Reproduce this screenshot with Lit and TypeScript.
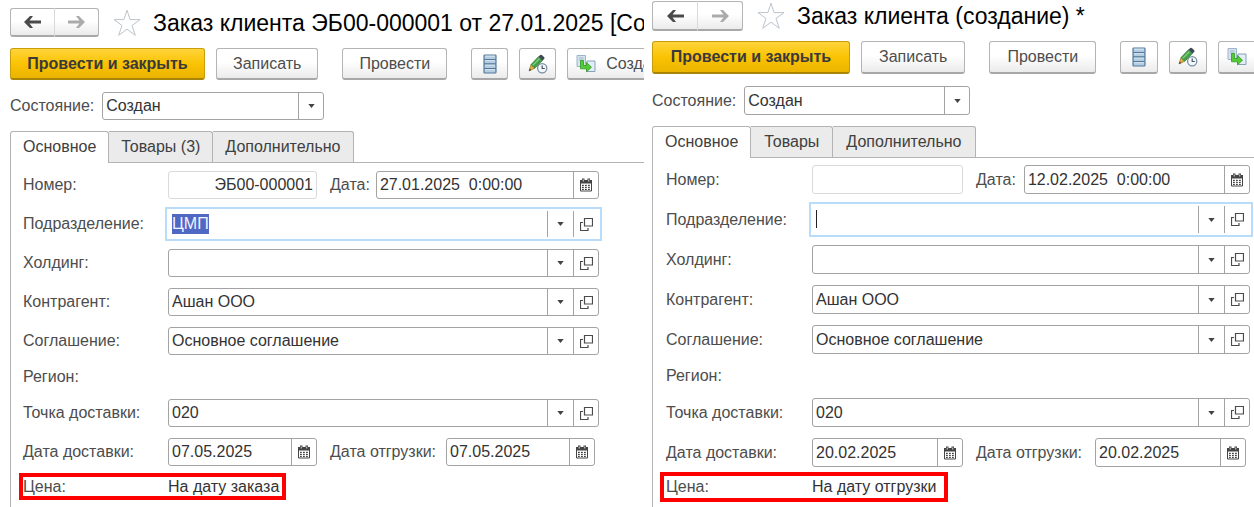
import { LitElement, html, css, svg, nothing } from "lit";
import { customElement, property } from "lit/decorators.js";
import { classMap } from "lit/directives/class-map.js";

interface Order {
  title: string;
  tabs: string[];
  number: string;
  date: string;
  department: string;
  partner: string;
  agreement: string;
  point: string;
  delivery: string;
  shipment: string;
  price: string;
}

const savedOrder: Order = {
  title: "Заказ клиента ЭБ00-000001 от 27.01.2025 [Создан]",
  tabs: ["Основное", "Товары (3)", "Дополнительно"],
  number: "ЭБ00-000001",
  date: "27.01.2025  0:00:00",
  department: "ЦМП",
  partner: "Ашан ООО",
  agreement: "Основное соглашение",
  point: "020",
  delivery: "07.05.2025",
  shipment: "07.05.2025",
  price: "На дату заказа",
};

const newOrder: Order = {
  title: "Заказ клиента (создание) *",
  tabs: ["Основное", "Товары", "Дополнительно"],
  number: "",
  date: "12.02.2025  0:00:00",
  department: "",
  partner: "Ашан ООО",
  agreement: "Основное соглашение",
  point: "020",
  delivery: "20.02.2025",
  shipment: "20.02.2025",
  price: "На дату отгрузки",
};

const arrow = (forward: boolean) => html`
  <svg width="17" height="12" viewBox="0 0 17 12" aria-hidden="true">
    <g transform=${forward ? "translate(17 0) scale(-1 1)" : "translate(0 0)"}>
      <path d="M0 6 6 0H9L5.600 4.500H17v3H5.600L9 12H6z" fill="currentColor" />
    </g>
  </svg>`;

const star = html`
  <svg width="28" height="28" viewBox="0 0 28 28" aria-hidden="true">
    <path d="M14 1.200 17.100 10.600H27L19 16.500 22.300 26.300 14 20.200 5.700 26.300 9 16.500 1 10.600h9.900z"
      fill="#fff" stroke="#bcc4cc" stroke-width="1" />
  </svg>`;

const caretDown = html`
  <svg width="7" height="4" viewBox="0 0 7 4" aria-hidden="true">
    <path d="M.3 0h6.400L3.500 4z" fill="#444" />
  </svg>`;

const openIcon = html`
  <svg width="13" height="13" viewBox="0 0 13 13" aria-hidden="true">
    <path d="M4.500 .5h8v7.500h-8z M3 4.500H.5v8h7.500v-2.500" fill="none" stroke="#4a4a4a" stroke-width="1.200" />
  </svg>`;

const calendarIcon = html`
  <svg width="12" height="14" viewBox="0 0 12 14" aria-hidden="true">
    <path d="M.5 2.500h11v10.500H.5z" fill="#fff" stroke="#444" />
    <path d="M0 2h12v3.500H0z M2 .5h2.500v3H2z M7.500 .5H10v3H7.500z" fill="#444" />
    <path d="M2.800 1.500h.8v2h-.8z M8.400 1.500h.8v2h-.8z" fill="#fff" />
    ${[2, 5, 8].map((x) => [6.8, 8.8, 10.8].map((y) => svg`<rect x=${x} y=${y} width="1.800" height="1.200" fill="#444" />`))}
  </svg>`;

const listIcon = html`
  <svg width="14" height="20" viewBox="0 0 14 20" aria-hidden="true">
    ${[1, 5.5, 10, 14.5].map(
      (y) => svg`<rect x="1" y=${y} width="12" height="4.500" rx=".8" fill="#b3cce0" stroke="#53789a" stroke-width="1.200" />
        <path d=${`M2 ${y + 1.2}h10`} stroke="#dbe8f2" stroke-width=".9" />`,
    )}
  </svg>`;

const pencilIcon = html`
  <svg width="20" height="20" viewBox="0 0 20 20" aria-hidden="true">
    <path d="M1 17 3 10.500 6.800 14.200z" fill="#e0b040" stroke="#9a7428" stroke-width=".7" />
    <path d="M1 17 1.700 14.600 3.300 16z" fill="#444" />
    <path d="M3 10.500 10.400 2.800 14.500 6.600 6.800 14.200z" fill="#43a047" stroke="#2c7a34" stroke-width=".7" />
    <path d="M4.800 11.400 11.500 4.500" stroke="#84cf85" stroke-width="1.300" />
    <path d="M10.400 2.800 12.200 1q1-.6 1.900.2l2.100 2q.7.900 0 1.700L14.500 6.600z" fill="#3f4a56" />
    <circle cx="14.200" cy="14.300" r="4.600" fill="#f4f8fb" stroke="#7890a4" stroke-width="1.300" />
    <path d="M14.200 11.500v3h2.600" fill="none" stroke="#445566" stroke-width="1.200" />
  </svg>`;

const createIcon = html`
  <svg width="20" height="20" viewBox="0 0 20 20" aria-hidden="true">
    <path d="M1 1.500h8.500v11H1z" fill="#d6e4ef" stroke="#9db4c8" />
    <path d="M3 4h4.500M3 6h4.500" stroke="#9db4c8" />
    <path d="M11 7h8v10.500h-8z" fill="#e3edf5" stroke="#86a2ba" />
    <path d="M4.500 6.500h3v5h3V8.600l5 4.600-5 4.600v-3h-6z" fill="#55c936" stroke="#2f9c22" stroke-width=".8" />
  </svg>`;

@customElement("order-form")
export class OrderForm extends LitElement {
  @property({ attribute: false }) order!: Order;
  @property({ type: Boolean, reflect: true }) draft = false;

  static styles = css`
    :host {
      --line: #a3a3a3;
      --field: 28px;
      --tool: 32px;
      --main: 195px;
      --icon-button: 37px;
      --short: 149px;
      --push: 16px;
      --label: 145px;
      --tab: 12px;
      --second-gap: 6px;
      --second-wide: 110px;
      display: flex;
      flex-direction: column;
      min-width: 0;
      overflow: hidden;
      box-sizing: border-box;
      padding: 8px 0 0 10px;
      font: 16px/20px "Liberation Sans", Arial, sans-serif;
      color: #4d4d4d;
      background: #fff;
    }
    :host([draft]) {
      --field: 29px;
      --tool: 33px;
      --main: 198px;
      --icon-button: 38px;
      --short: 151px;
      --push: 17px;
      --label: 146px;
      --tab: 13px;
      --second-gap: 8px;
      --second-wide: 111px;
      padding: 1px 0 0 8px;
    }
    * { box-sizing: border-box; }
    button, input, select { font: inherit; color: inherit; margin: 0; }
    svg { display: block; flex: none; }
    .head { display: flex; align-items: center; height: 29px; margin-bottom: 11px; }
    :host([draft]) .head { height: 30px; margin-bottom: 10px; }
    .nav { display: flex; flex: none; width: 89px; height: 100%; margin-right: 14px; }
    :host([draft]) .nav { width: 91px; }
    .push {
      display: flex;
      flex: none;
      align-items: center;
      justify-content: center;
      gap: 10px;
      padding: 0 var(--push);
      border: 1px solid #b4b4b4;
      border-bottom: 2px solid #a8a8a8;
      border-radius: 3px;
      background: linear-gradient(#fff 45%, #ebebeb);
      white-space: nowrap;
    }
    .nav .push { flex: 1; padding: 0; color: #4a4a4a; }
    .nav .push:first-child { border-right: 0; border-radius: 3px 0 0 3px; }
    .nav .push:last-child { border-left-color: #d8d8d8; border-radius: 0 3px 3px 0; color: #ababab; }
    h1 {
      margin: 0 0 0 12px;
      font-size: 23px;
      line-height: 28px;
      font-weight: 400;
      color: #000;
      white-space: nowrap;
    }
    .tools { display: flex; height: var(--tool); gap: 11px; margin-bottom: 12px; }
    .tools .main {
      min-width: var(--main);
      font-weight: 700;
      color: #3a3a3a;
      border-color: #c79d0c;
      border-bottom-color: #a98408;
      background: linear-gradient(#ffd43c, #fac303 50%, #ebb400);
    }
    .tools .post { margin: 0 13px; }
    .tools .icon { width: var(--icon-button); padding: 0; }
    .tools .create { padding: 0 16px 0 8px; }
    .state { display: flex; align-items: center; gap: 8px; margin-bottom: 11px; }
    .field {
      display: flex;
      flex: 1;
      min-width: 0;
      height: var(--field);
      border: 1px solid var(--line);
      border-radius: 3px;
      background: #fff;
      color: #333;
    }
    .field input {
      flex: 1;
      width: 0;
      min-width: 0;
      padding: 0 3px;
      border: 0;
      outline: 0;
      background: none;
      white-space: pre;
    }
    .field input::selection { background: #4f68c4; color: #f2f4ff; }
    .field.locked { border-color: #dadada; }
    .field.locked input { text-align: right; }
    .field.short { flex: none; width: var(--short); }
    .field.focus {
      border-color: transparent;
      border-radius: 0;
      outline: 2px solid #b8dcfa;
      outline-offset: 1px;
    }
    .caret { flex: none; width: 1px; height: 18px; margin: 4px 0 0 3px; background: #222; }
    .pick {
      display: flex;
      flex: none;
      align-items: center;
      justify-content: center;
      width: 26px;
      padding: 0;
      border: 0;
      border-left: 1px solid var(--line);
      background: none;
    }
    .pick:last-child { width: 25px; }
    .field.state-field { position: relative; flex: none; width: 222px; }
    :host([draft]) .field.state-field { width: 226px; }
    .state-field select {
      flex: 1;
      padding: 0 28px 0 3px;
      border: 0;
      outline: 0;
      appearance: none;
      background: none;
    }
    .state-field .pick { position: absolute; inset: 0 0 0 auto; pointer-events: none; }
    .tabs { display: flex; flex: none; height: 32px; border-bottom: 1px solid #b3b3b3; }
    .tab {
      padding: 0 var(--tab);
      border: 1px solid #b3b3b3;
      border-left: 0;
      border-bottom: 0;
      border-radius: 0 3px 0 0;
      background: #ebebeb;
      color: #404040;
      white-space: nowrap;
    }
    .tab.active {
      position: relative;
      margin-bottom: -1px;
      padding: 0 12px 2px;
      border-left: 1px solid #b3b3b3;
      border-radius: 3px 3px 0 0;
      background: #fff;
    }
    .panel { flex: 1; padding: 8px 45px 0 12px; border-left: 1px solid #b3b3b3; }
    :host([draft]) .panel { padding: 7px 4px 0 13px; }
    .rows { display: grid; gap: 11px; }
    .row { display: flex; align-items: center; }
    .row > label:first-child, .caption { flex: none; width: var(--label); }
    .row.plain { height: 22px; }
    .second { flex: none; margin: 0 var(--second-gap) 0 13px; }
    .second.wide { width: var(--second-wide); }
    .price {
      display: flex;
      align-items: center;
      width: fit-content;
      height: 27px;
      margin: 7px 0 0 -4px;
      padding-right: 3px;
      border: 4px solid #f00;
    }
    :host([draft]) .price { height: 30px; margin: 5px 0 0 -6px; padding: 0 8px 0 2px; }
    .value { color: #333; white-space: nowrap; }
  `;

  firstUpdated() {
    if (this.draft) return;
    const input = this.renderRoot.querySelector<HTMLInputElement>("#department");
    input?.focus({ preventScroll: true });
    input?.select();
  }

  private reference(id: string, label: string, value: string, focus = false) {
    return html`<div class="row">
      <label for=${id}>${label}:</label>
      <div class=${classMap({ field: true, focus })}>
        ${focus && this.draft ? html`<span class="caret"></span>` : nothing}
        <input id=${id} type="text" .value=${value} />
        <button class="pick" aria-label="Выбрать">${caretDown}</button>
        <button class="pick" aria-label="Открыть">${openIcon}</button>
      </div>
    </div>`;
  }

  private dateField(id: string, value: string, short: boolean) {
    return html`<div class=${classMap({ field: true, short })}>
      <input id=${id} type="text" .value=${value} />
      <button class="pick" aria-label="Календарь">${calendarIcon}</button>
    </div>`;
  }

  render() {
    const o = this.order;
    return html`
      <header class="head">
        <div class="nav">
          <button class="push" aria-label="Назад">${arrow(false)}</button>
          <button class="push" aria-label="Вперед">${arrow(true)}</button>
        </div>
        ${star}
        <h1>${o.title}</h1>
      </header>
      <div class="tools">
        <button class="push main">Провести и закрыть</button>
        <button class="push">Записать</button>
        <button class="push post">Провести</button>
        <button class="push icon" aria-label="Движения">${listIcon}</button>
        <button class="push icon" aria-label="История">${pencilIcon}</button>
        <button class="push create">${createIcon}<span>Создать</span></button>
      </div>
      <div class="state">
        <label for="state">Состояние:</label>
        <div class="field state-field">
          <select id="state"><option>Создан</option></select>
          <span class="pick">${caretDown}</span>
        </div>
      </div>
      <div class="tabs" role="tablist">
        ${o.tabs.map(
          (t, i) => html`<button role="tab" aria-selected=${i === 0} class=${classMap({ tab: true, active: i === 0 })}>${t}</button>`,
        )}
      </div>
      <section class="panel">
        <div class="rows">
          <div class="row">
            <label for="number">Номер:</label>
            <div class="field locked short"><input id="number" type="text" readonly .value=${o.number} /></div>
            <label class="second" for="date">Дата:</label>
            ${this.dateField("date", o.date, false)}
          </div>
          ${this.reference("department", "Подразделение", o.department, true)}
          ${this.reference("holding", "Холдинг", "")}
          ${this.reference("partner", "Контрагент", o.partner)}
          ${this.reference("agreement", "Соглашение", o.agreement)}
          <div class="row plain"><span class="caption">Регион:</span></div>
          ${this.reference("point", "Точка доставки", o.point)}
          <div class="row">
            <label for="delivery">Дата доставки:</label>
            ${this.dateField("delivery", o.delivery, true)}
            <label class="second wide" for="shipment">Дата отгрузки:</label>
            ${this.dateField("shipment", o.shipment, true)}
          </div>
        </div>
        <div class="price">
          <span class="caption">Цена:</span>
          <span class="value">${o.price}</span>
        </div>
      </section>
    `;
  }
}

@customElement("app-root")
export class AppRoot extends LitElement {
  static styles = css`
    :host {
      display: grid;
      grid-template-columns: minmax(0, 644fr) minmax(0, 610fr);
      min-height: 100vh;
      background: #fff;
    }
  `;

  render() {
    return html`
      <order-form .order=${savedOrder}></order-form>
      <order-form draft .order=${newOrder}></order-form>
    `;
  }
}
